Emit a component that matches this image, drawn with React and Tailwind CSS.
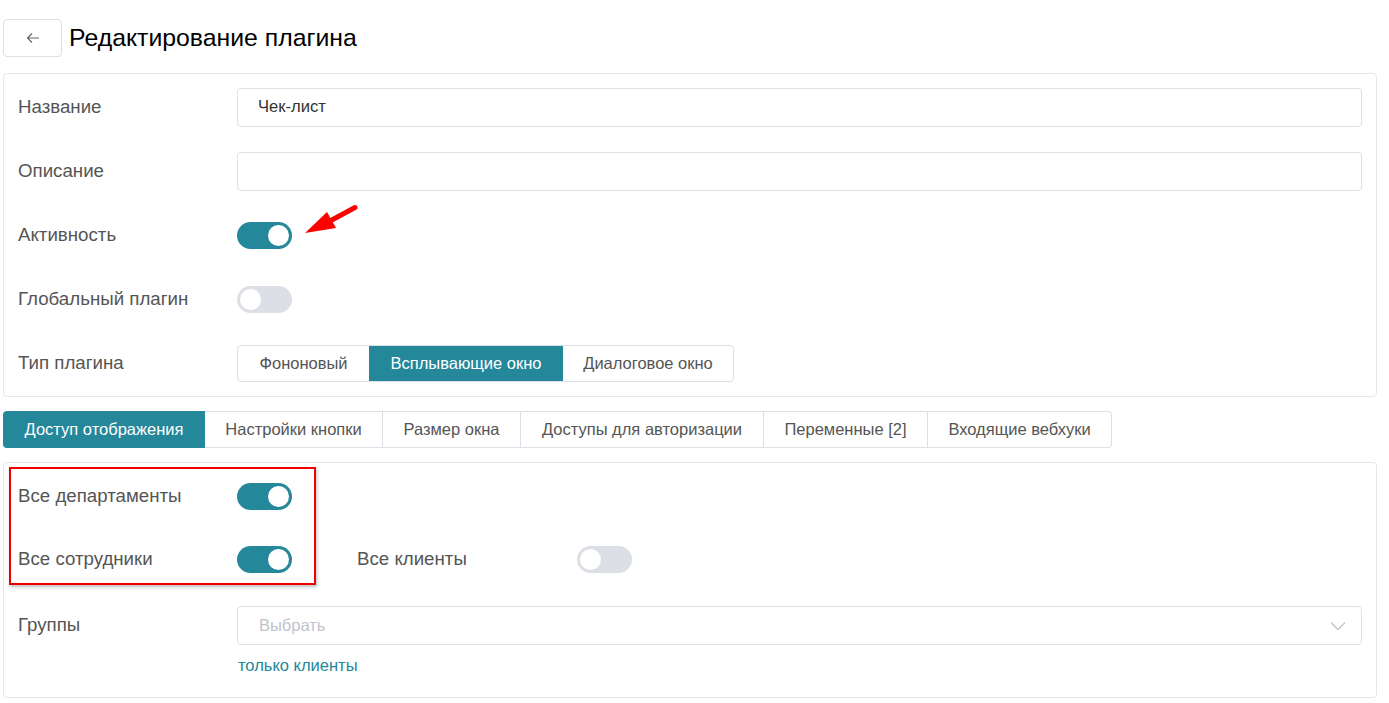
import React from "react";

const Toggle = ({ on }) => (
  <div
    className={`w-[55px] h-[27px] rounded-full p-[3px] flex items-center ${
      on ? "bg-[#24879a] justify-end" : "bg-[#dcdfe6] justify-start"
    }`}
  >
    <div className="w-[21px] h-[21px] rounded-full bg-white" />
  </div>
);

const Row = ({ label, children }) => (
  <div className="flex items-center h-[39px]">
    <div className="w-[233px] pl-[14px] text-[18.7px] text-[#555] whitespace-nowrap">{label}</div>
    <div className="flex-1 flex items-center">{children}</div>
  </div>
);

const Input = ({ value }) => (
  <div className="flex-1 h-[39px] border border-[#dcdfe6] rounded-[4px] flex items-center px-[20px] text-[16.6px] text-[#333]">
    {value}
  </div>
);

const tabs = [
  "Доступ отображения",
  "Настройки кнопки",
  "Размер окна",
  "Доступы для авторизации",
  "Переменные [2]",
  "Входящие вебхуки",
];
const tabW = [202, 178, 138, 243, 164, 184];

export default function App() {
  return (
    <div
      className="w-[1389px] h-[703px] bg-white px-[3px] pt-[19px] relative"
      style={{ fontFamily: '"Liberation Sans", Arial, sans-serif' }}
    >
      <div className="flex items-center gap-[7px] pr-[9px]">
        <div className="w-[59px] h-[38px] border border-[#dcdfe6] rounded-[4px] flex items-center justify-center">
          <svg width="14" height="14" viewBox="0 0 14 14" fill="none" stroke="#606266" strokeWidth="1.1">
            <path d="M13 7H1.5M6 2.5L1.5 7L6 11.5" />
          </svg>
        </div>
        <h1 className="text-[24.8px] text-black">Редактирование плагина</h1>
      </div>

      <div className="mt-[16px] mr-[9px] border border-[#e4e7ed] rounded-[4px] pt-[14px] pb-[13px] pr-[14px] flex flex-col gap-[25px]">
        <Row label="Название">
          <Input value="Чек-лист" />
        </Row>
        <Row label="Описание">
          <Input value="" />
        </Row>
        <Row label="Активность">
          <Toggle on />
        </Row>
        <Row label="Глобальный плагин">
          <Toggle />
        </Row>
        <Row label="Тип плагина">
          <div className="flex h-[37px] border border-[#dcdfe6] rounded-[4px] overflow-hidden text-[16.5px] text-[#555]">
            <div className="w-[131px] flex items-center justify-center">Фононовый</div>
            <div className="w-[194px] flex items-center justify-center bg-[#24879a] text-white">
              Всплывающие окно
            </div>
            <div className="w-[170px] flex items-center justify-center">Диалоговое окно</div>
          </div>
        </Row>
      </div>

      <div className="mt-[14px] flex h-[37px]">
        {tabs.map((t, i) => (
          <div
            key={t}
            style={{ width: tabW[i] }}
            className={`flex items-center justify-center text-[16.5px] whitespace-nowrap ${
              i === 0
                ? "bg-[#24879a] text-white rounded-l-[4px]"
                : "border-y border-r border-[#dcdfe6] text-[#555]"
            } ${i === tabs.length - 1 ? "rounded-r-[4px]" : ""}`}
          >
            {t}
          </div>
        ))}
      </div>

      <div className="mt-[14px] mr-[9px] border border-[#e4e7ed] rounded-[4px] pt-[14px] pb-[19px] pr-[14px] flex flex-col">
        <Row label="Все департаменты">
          <Toggle on />
        </Row>
        <div className="mt-[24px]">
          <Row label="Все сотрудники">
            <Toggle on />
            <div className="w-[120px] ml-[65px] text-[18.7px] text-[#555] whitespace-nowrap">Все клиенты</div>
            <div className="ml-[100px]">
              <Toggle />
            </div>
          </Row>
        </div>
        <div className="mt-[27px]">
          <Row label="Группы">
            <div className="flex-1 h-[39px] border border-[#dcdfe6] rounded-[4px] flex items-center justify-between pl-[21px] pr-[15px] text-[16.5px] text-[#c0c4cc]">
              <span>Выбрать</span>
              <svg width="16" height="10" viewBox="0 0 16 10" fill="none" stroke="#c0c4cc" strokeWidth="1.3">
                <path d="M1 1.5L8 8.5L15 1.5" />
              </svg>
            </div>
          </Row>
        </div>
        <div className="pl-[234px] mt-[8px] text-[16.5px] text-[#24879a]">только клиенты</div>
      </div>

      {/* annotations */}
      <div className="absolute left-[9px] top-[467px] w-[307px] h-[118px] border-2 border-[#e00] shadow-[1px_2px_3px_rgba(0,0,0,0.25)]" />
      <svg className="absolute left-[300px] top-[200px]" width="64" height="40" viewBox="0 0 64 40">
        <path d="M55 7.5 L30 21" stroke="#f00" strokeWidth="5" strokeLinecap="round" />
        <path d="M5 33 L27 12 L36 28 Z" fill="#f00" />
      </svg>
    </div>
  );
}
